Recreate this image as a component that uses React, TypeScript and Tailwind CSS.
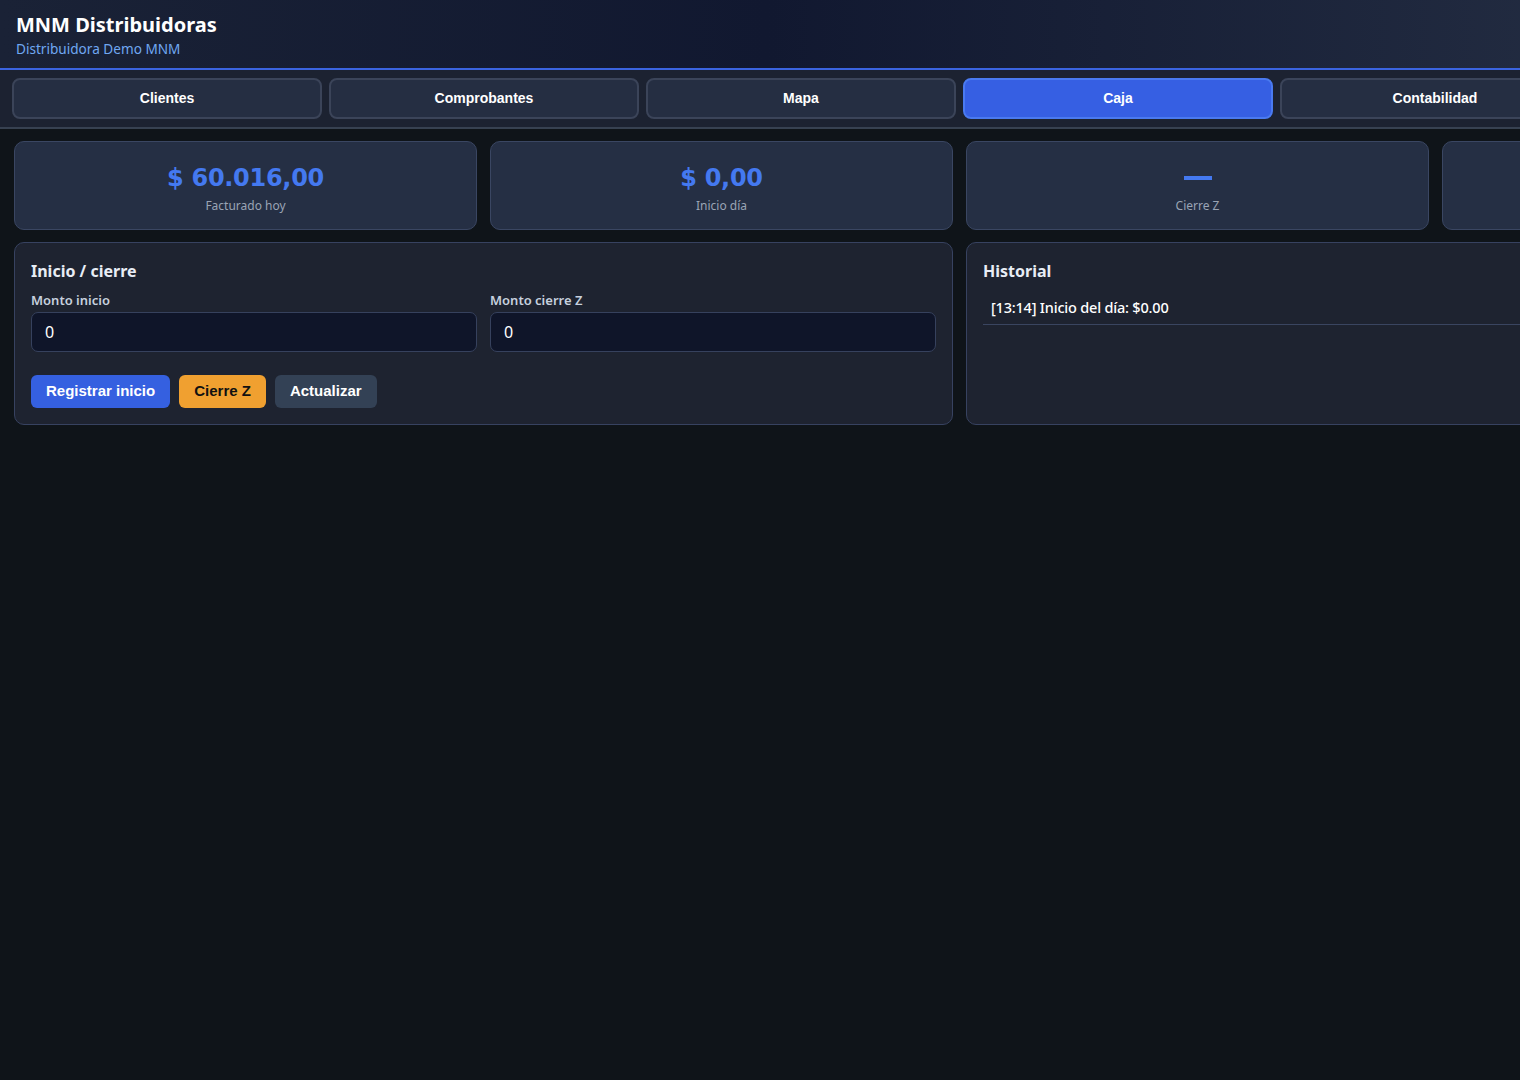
import React from 'react';

const tabs = ['Clientes', 'Comprobantes', 'Mapa', 'Caja', 'Contabilidad', ''];

const stats = [
  { value: '$ 60.016,00', label: 'Facturado hoy' },
  { value: '$ 0,00', label: 'Inicio día' },
  { value: null, label: 'Cierre Z' },
  { value: '', label: '' },
];

const historial = ['[13:14] Inicio del día: $0.00'];

function StatCard({ value, label }: { value: string | null; label: string }) {
  return (
    <div className="h-[89px] rounded-[10px] border border-[#3a4662] bg-[#252f44] flex flex-col items-center justify-center">
      {value === null ? (
        <div className="h-[32px] mt-[4px] flex items-center">
          <div className="w-[28px] h-[4px] bg-[#4479f0]" />
        </div>
      ) : (
        <div className="h-[32px] mt-[4px] font-['DejaVu_Sans',sans-serif] font-bold text-[24px] leading-[32px] text-[#4479f0] tracking-[-0.3px]">
          {value}
        </div>
      )}
      <div className="h-[16px] text-[12px] leading-[16px] text-[#9aa4b5] mt-[4px]">{label}</div>
    </div>
  );
}

function Campo({ label }: { label: string }) {
  return (
    <div className="flex flex-col">
      <label className="text-[13px] leading-[18px] font-semibold text-[#c6d0de] mb-[3px]">{label}</label>
      <input
        defaultValue="0"
        className="h-[40px] rounded-[7px] border border-[#36415d] bg-[#0f1529] px-[13px] text-[16px] text-white outline-none"
      />
    </div>
  );
}

export default function App() {
  return (
    <div className="w-[1919px] min-h-[1080px] bg-[#0f1419] font-['Noto_Sans',sans-serif]">
      <header className="h-[70px] border-b-2 border-[#3b64e0] bg-gradient-to-r from-[#1a2236] via-[#111830] via-40% to-[#2a3448] px-[16px] pt-[12px]">
        <h1 className="text-[20px] leading-[26px] font-bold text-white">MNM Distribuidoras</h1>
        <p className="text-[13.6px] leading-[18px] text-[#70a8f2] mt-[2px]">Distribuidora Demo MNM</p>
      </header>

      <nav className="h-[59px] border-b-2 border-[#374151] bg-[#1c2231] px-[12px] flex items-center gap-[7px]">
        {tabs.map((t, i) => (
          <button
            key={i}
            className={`h-[41px] w-[310px] rounded-[8px] border-2 font-['Liberation_Sans',sans-serif] font-bold text-[14px] text-white ${
              t === 'Caja' ? 'bg-[#365fe3] border-[#4a7af0]' : 'bg-[#252e42] border-[#3b4459]'
            }`}
          >
            {t}
          </button>
        ))}
      </nav>

      <main className="px-[14px] pt-[12px]">
        <div className="grid grid-cols-4 gap-[13px]">
          {stats.map((s, i) => (
            <StatCard key={i} value={s.value} label={s.label} />
          ))}
        </div>

        <div className="grid grid-cols-2 gap-[13px] mt-[12px]">
          <section className="h-[183px] rounded-[10px] border border-[#374260] bg-[#1e2330] px-[16px] pt-[17px]">
            <h2 className="text-[16px] leading-[22px] font-bold text-[#e8edf5]">Inicio / cierre</h2>
            <div className="grid grid-cols-2 gap-[13px] mt-[9px]">
              <Campo label="Monto inicio" />
              <Campo label="Monto cierre Z" />
            </div>
            <div className="flex gap-[9px] mt-[23px] font-['Liberation_Sans',sans-serif] font-bold text-[15px]">
              <button className="h-[33px] px-[15px] rounded-[6px] bg-[#3560e0] text-white">Registrar inicio</button>
              <button className="h-[33px] px-[15px] rounded-[6px] bg-[#f0a030] text-[#111111]">Cierre Z</button>
              <button className="h-[33px] px-[15px] rounded-[6px] bg-[#334155] text-white">Actualizar</button>
            </div>
          </section>

          <section className="h-[183px] rounded-[10px] border border-[#374260] bg-[#1e2330] px-[16px] pt-[17px]">
            <h2 className="text-[16px] leading-[22px] font-bold text-[#e8edf5]">Historial</h2>
            <ul className="mt-[8px]">
              {historial.map((h) => (
                <li key={h} className="px-[8px] py-[7px] border-b border-[#3a4560] text-[14.5px] leading-[20px] font-medium text-white tracking-[-0.2px]">
                  {h}
                </li>
              ))}
            </ul>
          </section>
        </div>
      </main>
    </div>
  );
}
